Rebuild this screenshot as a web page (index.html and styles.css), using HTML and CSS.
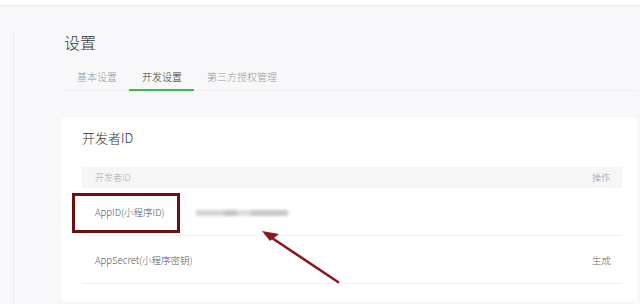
FILE: index.html
```html
<!DOCTYPE html>
<html lang="zh-CN">
<head>
  <meta charset="UTF-8" />
  <title>设置</title>
  <link rel="stylesheet" href="styles.css">
</head>
<body>
  <div class="topbar"></div>
  <div class="layout">
    <div class="side"></div>
    <div class="main">
      <h1 class="title">设置</h1>
      <div class="tabs">
        <div class="tab">基本设置</div>
        <div class="tab active">开发设置</div>
        <div class="tab">第三方授权管理</div>
      </div>

      <div class="card">
        <h2 class="card-title">开发者ID</h2>
        <div class="table">
          <div class="row head">
            <div class="cell name">开发者ID</div>
            <div class="cell value"></div>
            <div class="cell op">操作</div>
          </div>
          <div class="row">
            <div class="cell name">AppID(小程序ID)</div>
            <div class="cell value"><span class="blur"></span></div>
            <div class="cell op"></div>
          </div>
          <div class="row">
            <div class="cell name">AppSecret(小程序密钥)</div>
            <div class="cell value"></div>
            <div class="cell op">生成</div>
          </div>
        </div>
      </div>
    </div>
  </div>

  <!-- annotation on top of the screenshot -->
  <div class="mark"></div>
  <svg class="arrow" width="640" height="304" viewBox="0 0 640 304">
    <line x1="338" y1="282" x2="266" y2="234" stroke="#8a1a1d" stroke-width="2.6" stroke-linecap="round"/>
    <path d="M262 231 L279 234 L270 241 Z" fill="#8a1a1d"/>
  </svg>
</body>
</html>
```

FILE: styles.css
```css
body {
  margin: 0;
  background: #f8f8fa;
  color: #333;
  font-family: "Noto Sans CJK SC", "Noto Sans", sans-serif;
  font-weight: 300;
  width: 640px;
  height: 304px;
  overflow: hidden;
}
.topbar {
  height: 5px;
  background: #fff;
  border-bottom: 1px solid #ececee;
}
.layout {
  display: flex;
}
.side {
  width: 13px;
  margin-top: 26px;
  height: 280px;
  border-right: 1px solid #e9e9eb;
}
.main {
  flex: 1;
  padding: 26px 3px 0 48px;
}
.title {
  margin: 0;
  padding-left: 2px;
  font-size: 16px;
  line-height: 20px;
  font-weight: 300;
  color: #333;
}
.tabs {
  display: flex;
  margin-top: 18px;
  margin-left: 2px;
  box-shadow: inset 0 -1px 0 #f0f0f2;
}
.tab {
  padding: 0 12px 5px 13px;
  font-size: 10px;
  line-height: 14px;
  color: #999;
  border-bottom: 2px solid transparent;
}
.tab.active {
  color: #333;
  border-bottom-color: #44b549;
}
.card {
  margin-top: 27px;
  background: #fff;
  padding: 11px 15px 17px 20px;
}
.card-title {
  margin: 0;
  font-size: 13px;
  line-height: 18px;
  font-weight: 300;
  color: #333;
}
.table {
  margin-top: 20px;
}
.row {
  display: flex;
  align-items: center;
  height: 48px;
  border-bottom: 1px solid #f0f0f2;
  box-sizing: border-box;
  font-size: 9.5px;
  color: #555;
  white-space: nowrap;
}
.row.head {
  height: 21px;
  background: #f6f6f8;
  border-bottom: none;
  font-size: 9px;
  color: #aaa;
}
.cell.name {
  width: 101px;
  padding-left: 13px;
}
.cell.value {
  flex: 1;
}
.cell.op {
  width: 30px;
  color: #666;
}
.row.head .cell.op {
  color: #999;
}
.blur {
  display: block;
  width: 92px;
  height: 6px;
  margin-top: 2px;
  background: linear-gradient(90deg, #d4d4d6 0 30%, #c4c4c6 30% 45%, #dcdcde 45% 60%, #c8c8ca 60% 100%);
  filter: blur(1.5px);
}
.mark {
  position: absolute;
  left: 72px;
  top: 193px;
  width: 102px;
  height: 34px;
  border: 3px solid #6d1015;
}
.arrow {
  position: absolute;
  left: 0;
  top: 0;
}
```
